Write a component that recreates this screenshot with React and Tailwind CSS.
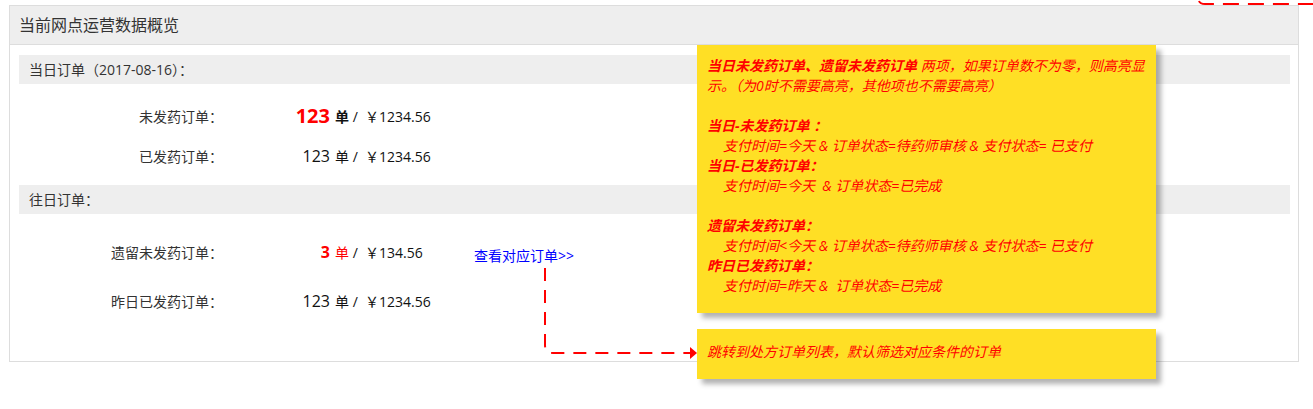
import React from 'react';

const font = { fontFamily: '"Open Sans", "Noto Sans CJK SC", sans-serif' };

function Row({ label, num, numClass, unitClass, amount, extra, height }) {
  return (
    <div className={`flex items-center ${height}`}>
      <div className="w-[213px] text-right text-[14px] text-[#333333]">{label}</div>
      <div className={`w-[107px] text-right ${numClass}`}>{num}</div>
      <div className="w-[144px] pl-[5px] text-[14px] text-[#111111] whitespace-nowrap">
        <span className={unitClass}>单</span> /&nbsp; ￥{amount}
      </div>
      {extra}
    </div>
  );
}

export default function App() {
  return (
    <div className="relative w-[1313px] h-[409px] overflow-hidden bg-white" style={font}>
      <div className="ml-[9px] mt-[5px] w-[1290px] border border-[#dddddd]">
        <div className="h-[39px] bg-[#eeeeee] border-b border-[#dddddd] pl-[9px] flex items-center text-[16px] text-[#333333]">
          当前网点运营数据概览
        </div>
        <div className="pt-[10px] pb-[36px]">
          <div className="ml-[9px] mr-[8px] h-[29px] bg-[#eeeeee] pl-[10px] flex items-center text-[14px] text-[#333333]">
            当日订单（2017-08-16）：
          </div>
          <div className="pt-[12px]">
            <Row
              label="未发药订单："
              num="123"
              numClass="text-[20px] font-bold text-[#ff0000]"
              unitClass="font-semibold"
              amount="1234.56"
              height="h-[40px]"
            />
            <Row
              label="已发药订单："
              num="123"
              numClass="text-[16px] text-[#111111]"
              amount="1234.56"
              height="h-[40px]"
            />
          </div>
          <div className="mt-[9px] ml-[9px] mr-[8px] h-[29px] bg-[#eeeeee] pl-[10px] flex items-center text-[14px] text-[#333333]">
            往日订单：
          </div>
          <div className="pt-[13px]">
            <Row
              label="遗留未发药订单："
              num="3"
              numClass="text-[16px] font-bold text-[#ff0000]"
              unitClass="text-[#ff0000]"
              amount="134.56"
              height="h-[50px]"
              extra={
                <span className="mt-[7px] text-[14px] text-[#0000ff] whitespace-nowrap">
                  查看对应订单&gt;&gt;
                </span>
              }
            />
            <Row
              label="昨日已发药订单："
              num="123"
              numClass="text-[16px] text-[#111111]"
              amount="1234.56"
              height="h-[48px]"
            />
          </div>
        </div>
      </div>

      {/* annotation notes */}
      <div className="absolute left-[697px] top-[45px] w-[459px] h-[268px] bg-[#ffdf25] shadow-[5px_5px_5px_rgba(0,0,0,0.3)] pl-[10px] pt-[11px] text-[14px] leading-[20px] italic text-[#ff0000] whitespace-nowrap">
        <div>
          <span className="font-bold">当日未发药订单、遗留未发药订单</span> 两项，如果订单数不为零，则高亮显
        </div>
        <div>示。（为0时不需要高亮，其他项也不需要高亮）</div>
        <div className="h-[20px]" />
        <div className="font-bold">当日-未发药订单 ：</div>
        <div className="pl-[16px]">支付时间=今天 &amp; 订单状态=待药师审核 &amp; 支付状态= 已支付</div>
        <div className="font-bold">当日-已发药订单：</div>
        <div className="pl-[16px]">支付时间=今天&nbsp; &amp; 订单状态=已完成</div>
        <div className="h-[20px]" />
        <div className="font-bold">遗留未发药订单：</div>
        <div className="pl-[16px]">支付时间&lt;今天 &amp; 订单状态=待药师审核 &amp; 支付状态= 已支付</div>
        <div className="font-bold">昨日已发药订单：</div>
        <div className="pl-[16px]">支付时间=昨天 &amp;&nbsp; 订单状态=已完成</div>
      </div>

      <div className="absolute left-[697px] top-[329px] w-[459px] h-[50px] bg-[#ffdf25] shadow-[5px_5px_5px_rgba(0,0,0,0.3)] pl-[10px] pt-[13px] text-[14px] leading-[20px] italic text-[#ff0000] whitespace-nowrap">
        跳转到处方订单列表，默认筛选对应条件的订单
      </div>

      {/* connectors */}
      <svg className="absolute left-0 top-0" width="1313" height="409" fill="none">
        <path d="M545 268 V345 Q545 353 553 353 H691" stroke="#ff0000" strokeWidth="2" strokeDasharray="13 9" />
        <polygon points="690,347 697,353 690,359" fill="#ff0000" />
        <path d="M1199 1 Q1200 4 1205 4 H1313" stroke="#ff0000" strokeWidth="2" strokeDasharray="16 9" />
      </svg>
    </div>
  );
}
